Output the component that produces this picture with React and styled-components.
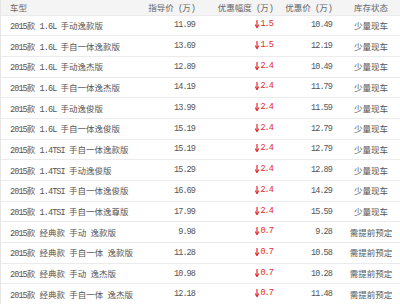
import styled, { createGlobalStyle } from "styled-components";

const GlobalStyle = createGlobalStyle`
  html, body {
    margin: 0;
    padding: 0;
    background: #fff;
  }
`;

const rows = [
  ["2015款 1.6L 手动逸款版", "11.99", "1.5", "10.49", "少量现车"],
  ["2015款 1.6L 手自一体逸款版", "13.69", "1.5", "12.19", "少量现车"],
  ["2015款 1.6L 手动逸杰版", "12.89", "2.4", "10.49", "少量现车"],
  ["2015款 1.6L 手自一体逸杰版", "14.19", "2.4", "11.79", "少量现车"],
  ["2015款 1.6L 手动逸俊版", "13.99", "2.4", "11.59", "少量现车"],
  ["2015款 1.6L 手自一体逸俊版", "15.19", "2.4", "12.79", "少量现车"],
  ["2015款 1.4TSI 手自一体逸款版", "15.19", "2.4", "12.79", "少量现车"],
  ["2015款 1.4TSI 手动逸俊版", "15.29", "2.4", "12.89", "少量现车"],
  ["2015款 1.4TSI 手自一体逸俊版", "16.69", "2.4", "14.29", "少量现车"],
  ["2015款 1.4TSI 手自一体逸尊版", "17.99", "2.4", "15.59", "少量现车"],
  ["2015款 经典款 手动 逸款版", "9.98", "0.7", "9.28", "需提前预定"],
  ["2015款 经典款 手自一体 逸款版", "11.28", "0.7", "10.58", "需提前预定"],
  ["2015款 经典款 手动 逸杰版", "10.98", "0.7", "10.28", "需提前预定"],
  ["2015款 经典款 手自一体 逸杰版", "12.18", "0.7", "11.48", "需提前预定"],
];

const Table = styled.div`
  width: 400px;
  font-family: "Liberation Mono", "Noto Sans CJK SC", monospace;
  font-size: 8.5px;
  color: #555;
  border-left: 1px solid #e6e6e6;
  box-sizing: border-box;
`;

const Row = styled.div`
  display: grid;
  grid-template-columns: 119px 80px 78px 64px 58px;
  align-items: center;
  height: ${(p) => (p.$head ? "15.5px" : "20.7px")};
  background: ${(p) => (p.$head ? "#f4f4f4" : "#fff")};
  border-bottom: 1px solid #ebebeb;
  box-sizing: border-box;
  white-space: nowrap;
`;

const Cell = styled.div`
  text-align: ${(p) => p.$align || "right"};
  padding: ${(p) => p.$pad || "0 5px 0 0"};
  color: ${(p) => (p.$head ? "#666" : "inherit")};
`;

const Latin = styled.span`
  letter-spacing: -0.9px;
`;

const Drop = styled.span`
  display: inline-flex;
  align-items: center;
  gap: 1px;
  color: #e5262b;
`;

const Mixed = ({ text }) =>
  text
    .split(/([\u0000-\u00ff]+)/)
    .filter(Boolean)
    .map((part, i) =>
      /^[\u0000-\u00ff]+$/.test(part) ? <Latin key={i}>{part}</Latin> : part
    );

const Arrow = () => (
  <svg width="4" height="8" viewBox="0 0 4 8">
    <path d="M2 0 V7" stroke="#e5262b" strokeWidth="1.2" />
    <path d="M0.2 4.6 L2 7.8 L3.8 4.6" fill="none" stroke="#e5262b" strokeWidth="1.1" />
  </svg>
);

const App = () => {
  return (
    <>
      <GlobalStyle />
      <Table>
        <Row $head>
          <Cell $head $align="left" $pad="0 0 0 9px">车型</Cell>
          <Cell $head><Mixed text="指导价 (万)" /></Cell>
          <Cell $head><Mixed text="优惠幅度 (万)" /></Cell>
          <Cell $head $pad="0 10px 0 0"><Mixed text="优惠价 (万)" /></Cell>
          <Cell $head $align="center" $pad="0">库存状态</Cell>
        </Row>
        {rows.map((r, i) => (
          <Row key={i}>
            <Cell $align="left" $pad="0 0 0 9px"><Mixed text={r[0]} /></Cell>
            <Cell><Latin>{r[1]}</Latin></Cell>
            <Cell>
              <Drop>
                <Arrow />
                <Latin>{r[2]}</Latin>
              </Drop>
            </Cell>
            <Cell $pad="0 10px 0 0"><Latin>{r[3]}</Latin></Cell>
            <Cell $align="center" $pad="0">{r[4]}</Cell>
          </Row>
        ))}
      </Table>
    </>
  );
};

export default App;
